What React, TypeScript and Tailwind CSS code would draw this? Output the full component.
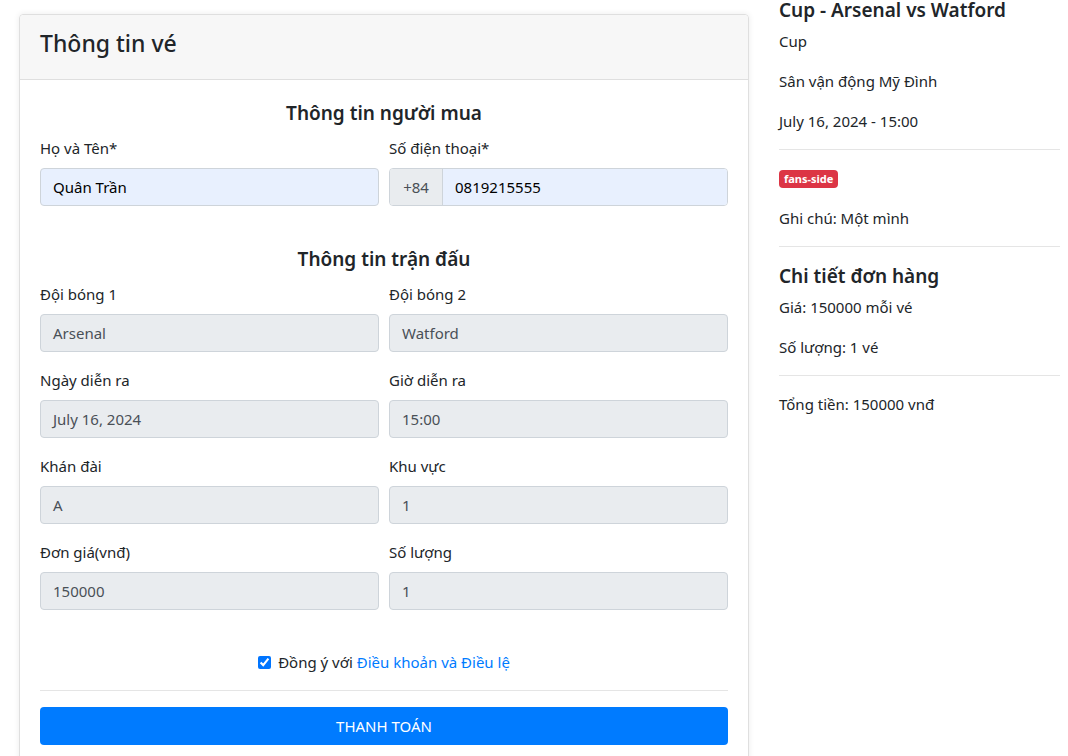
import React from 'react';

const font = { fontFamily: '"Noto Sans", "Open Sans", Arial, sans-serif' };

const Field: React.FC<{ label: string; value: string }> = ({ label, value }) => (
  <div className="mb-4">
    <label className="block mb-2 leading-6">{label}</label>
    <div className="h-[38px] px-3 flex items-center rounded border border-[#ced4da] bg-[#e9ecef] text-[#495057]">
      {value}
    </div>
  </div>
);

export default function App() {
  return (
    <div className="flex bg-white text-[#212529] text-[15px] min-h-[756px] overflow-hidden" style={font}>
      <div className="ml-[19px] mt-[14px] w-[730px] shrink-0 self-start rounded border border-[#dfdfdf] shadow-[0_0_6px_rgba(0,0,0,0.08)]">
        <div className="h-[65px] px-5 pb-2 flex items-center bg-[#f7f7f7] border-b border-[#dfdfdf] rounded-t">
          <h3 className="text-[23px] font-medium leading-none">Thông tin vé</h3>
        </div>
        <div className="p-5">
          <h5 className="text-center text-[19px] font-semibold leading-6 mt-[1px] mb-[11px]">Thông tin người mua</h5>
          <div className="grid grid-cols-2 gap-x-[10px]">
            <div className="mb-4">
              <label className="block mb-2 leading-6">Họ và Tên*</label>
              <div className="h-[38px] px-3 flex items-center rounded border border-[#ced4da] bg-[#e8f0fe] text-black">
                Quân Trần
              </div>
            </div>
            <div className="mb-4">
              <label className="block mb-2 leading-6">Số điện thoại*</label>
              <div className="h-[38px] flex rounded border border-[#ced4da] overflow-hidden">
                <div className="w-[53px] flex items-center justify-center bg-[#e9ecef] border-r border-[#ced4da] text-[#495057]">+84</div>
                <div className="flex-1 px-3 flex items-center bg-[#e8f0fe] text-black">0819215555</div>
              </div>
            </div>
          </div>
          <h5 className="text-center text-[19px] font-semibold leading-6 mt-[25px] mb-[11px]">Thông tin trận đấu</h5>
          <div className="grid grid-cols-2 gap-x-[10px]">
            <Field label="Đội bóng 1" value="Arsenal" />
            <Field label="Đội bóng 2" value="Watford" />
            <Field label="Ngày diễn ra" value="July 16, 2024" />
            <Field label="Giờ diễn ra" value="15:00" />
            <Field label="Khán đài" value="A" />
            <Field label="Khu vực" value="1" />
            <Field label="Đơn giá(vnđ)" value="150000" />
            <Field label="Số lượng" value="1" />
          </div>
          <div className="mt-[24px] flex items-center justify-center gap-[7px] leading-6">
            <input type="checkbox" defaultChecked className="w-[13px] h-[13px] accent-[#0075ff]" />
            <span>
              Đồng ý với <a className="text-[#007bff]">Điều khoản và Điều lệ</a>
            </span>
          </div>
          <hr className="mt-[16px] mb-4 border-[#e5e5e5]" />
          <button className="w-full h-[38px] rounded bg-[#007bff] text-white uppercase">Thanh toán</button>
          <div className="h-5" />
        </div>
      </div>
      <div className="ml-[30px] w-[281px] shrink-0 -mt-[2px]">
        <h4 className="text-[19px] font-semibold leading-6 mb-[7px]">Cup - Arsenal vs Watford</h4>
        <p className="leading-6 mb-4">Cup</p>
        <p className="leading-6 mb-4">Sân vận động Mỹ Đình</p>
        <p className="leading-6">July 16, 2024 - 15:00</p>
        <hr className="mt-[16px] mb-[20px] border-[#e5e5e5]" />
        <div className="leading-none">
          <span className="inline-block bg-[#dc3545] text-white text-[11px] font-bold leading-[12px] px-[5px] py-[3px] rounded">fans-side</span>
        </div>
        <p className="leading-6 mt-[18px]">Ghi chú: Một mình</p>
        <hr className="mt-[16px] mb-[17px] border-[#e5e5e5]" />
        <h4 className="text-[19px] font-semibold leading-6 mb-[7px]">Chi tiết đơn hàng</h4>
        <p className="leading-6 mb-4">Giá: 150000 mỗi vé</p>
        <p className="leading-6">Số lượng: 1 vé</p>
        <hr className="mt-[16px] mb-[16px] border-[#e5e5e5]" />
        <p className="leading-6">Tổng tiền: 150000 vnđ</p>
      </div>
    </div>
  );
}
